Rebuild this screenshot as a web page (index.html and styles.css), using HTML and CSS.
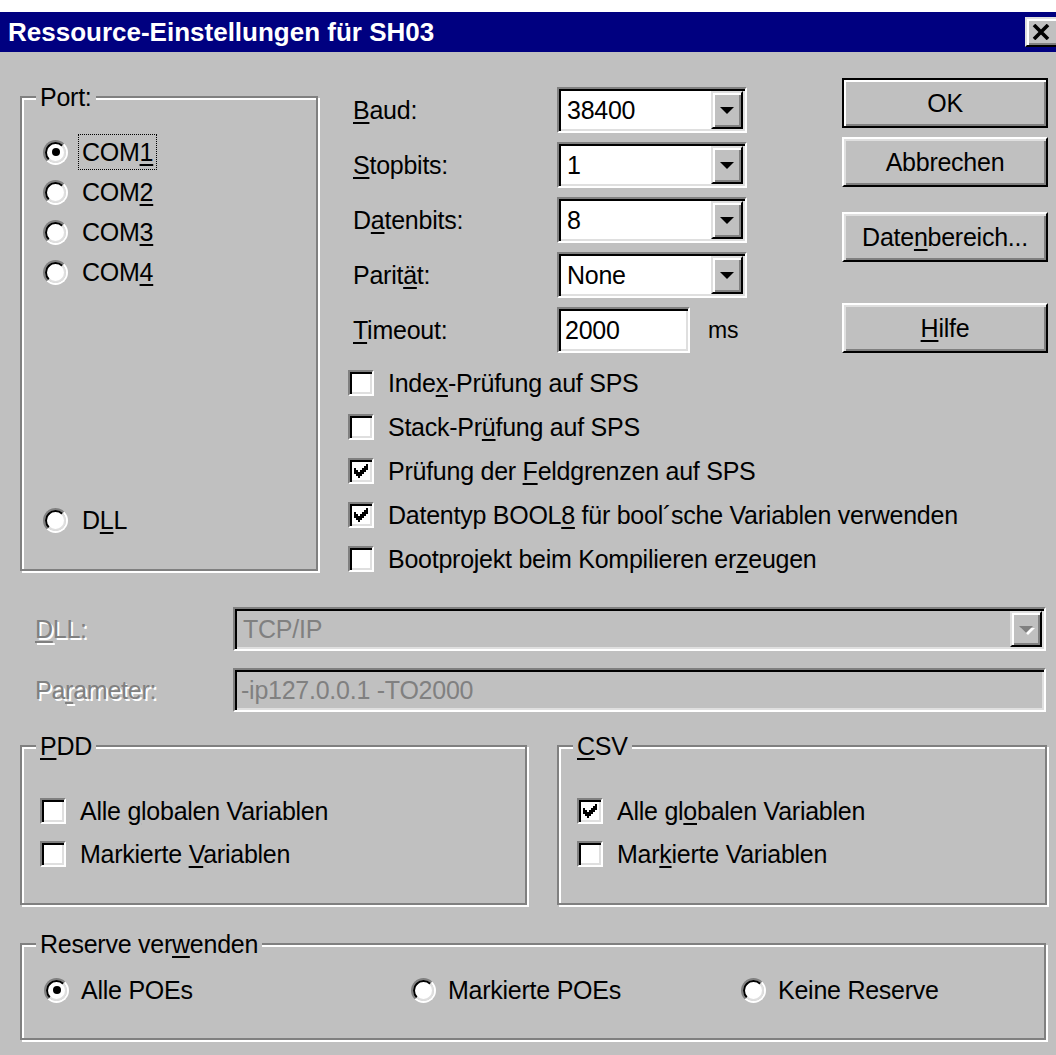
FILE: index.html
```html
<!DOCTYPE html>
<html lang="de">
<head>
<meta charset="utf-8">
<title>Ressource-Einstellungen für SH03</title>
<link rel="stylesheet" href="styles.css">
</head>
<body>
<svg class="defs" width="0" height="0" aria-hidden="true">
  <symbol id="tick" viewBox="0 0 7 7">
    <rect x="0" y="2" width="1" height="3"/>
    <rect x="1" y="3" width="1" height="3"/>
    <rect x="2" y="4" width="1" height="3"/>
    <rect x="3" y="3" width="1" height="3"/>
    <rect x="4" y="2" width="1" height="3"/>
    <rect x="5" y="1" width="1" height="3"/>
    <rect x="6" y="0" width="1" height="3"/>
  </symbol>
</svg>

<div class="window">
  <div class="titlebar">
    <span class="title">Ressource-Einstellungen für SH03</span>
    <span class="close">
      <svg width="18" height="16" viewBox="0 0 18 16"><path d="M2 1 L16 15 M16 1 L2 15" stroke="#000" stroke-width="3.6"/></svg>
    </span>
  </div>

  <div class="client">
    <div class="top">
      <div class="group port">
        <span class="legend">Port:</span>
        <label class="opt"><span class="radio on"></span><span class="cap focus">COM<u>1</u></span></label>
        <label class="opt"><span class="radio"></span><span class="cap">COM<u>2</u></span></label>
        <label class="opt"><span class="radio"></span><span class="cap">COM<u>3</u></span></label>
        <label class="opt"><span class="radio"></span><span class="cap">COM<u>4</u></span></label>
        <label class="opt last"><span class="radio"></span><span class="cap">D<u>L</u>L</span></label>
      </div>

      <div class="settings">
        <div class="field">
          <span class="lbl"><u>B</u>aud:</span>
          <span class="combo"><span class="val">38400</span><span class="drop"><i class="arrow"></i></span></span>
        </div>
        <div class="field">
          <span class="lbl"><u>S</u>topbits:</span>
          <span class="combo"><span class="val">1</span><span class="drop"><i class="arrow"></i></span></span>
        </div>
        <div class="field">
          <span class="lbl">D<u>a</u>tenbits:</span>
          <span class="combo"><span class="val">8</span><span class="drop"><i class="arrow"></i></span></span>
        </div>
        <div class="field">
          <span class="lbl">Parit<u>ä</u>t:</span>
          <span class="combo"><span class="val">None</span><span class="drop"><i class="arrow"></i></span></span>
        </div>
        <div class="field">
          <span class="lbl"><u>T</u>imeout:</span>
          <span class="edit short">2000</span>
          <span class="unit">ms</span>
        </div>

        <div class="checks">
          <label class="chk"><span class="box"></span><span>Inde<u>x</u>-Prüfung auf SPS</span></label>
          <label class="chk"><span class="box"></span><span>Stack-Pr<u>ü</u>fung auf SPS</span></label>
          <label class="chk"><span class="box"><svg class="tick"><use href="#tick"/></svg></span><span>Prüfung der <u>F</u>eldgrenzen auf SPS</span></label>
          <label class="chk"><span class="box"><svg class="tick"><use href="#tick"/></svg></span><span>Datentyp BOOL<u>8</u> für bool´sche Variablen verwenden</span></label>
          <label class="chk"><span class="box"></span><span>Bootprojekt beim Kompilieren er<u>z</u>eugen</span></label>
        </div>
      </div>

      <div class="buttons">
        <button class="btn default">OK</button>
        <button class="btn">Abbrechen</button>
        <button class="btn data">Date<u>n</u>bereich...</button>
        <button class="btn help"><u>H</u>ilfe</button>
      </div>
    </div>

    <div class="drow first">
      <span class="dlbl"><u>D</u>LL:</span>
      <span class="combo wide off"><span class="val">TCP/IP</span><span class="drop"><i class="arrow"></i></span></span>
    </div>
    <div class="drow">
      <span class="dlbl">Pa<u>r</u>ameter:</span>
      <span class="edit wide off">-ip127.0.0.1 -TO2000</span>
    </div>

    <div class="pair">
      <div class="group pdd">
        <span class="legend"><u>P</u>DD</span>
        <label class="chk"><span class="box"></span><span>Alle <u>g</u>lobalen Variablen</span></label>
        <label class="chk"><span class="box"></span><span>Markierte <u>V</u>ariablen</span></label>
      </div>
      <div class="group csv">
        <span class="legend"><u>C</u>SV</span>
        <label class="chk"><span class="box"><svg class="tick"><use href="#tick"/></svg></span><span>Alle gl<u>o</u>balen Variablen</span></label>
        <label class="chk"><span class="box"></span><span>Mar<u>k</u>ierte Variablen</span></label>
      </div>
    </div>

    <div class="group reserve">
      <span class="legend">Reserve ver<u>w</u>enden</span>
      <label class="opt r1"><span class="radio on"></span><span class="cap">Alle POEs</span></label>
      <label class="opt r2"><span class="radio"></span><span class="cap">Markierte POEs</span></label>
      <label class="opt"><span class="radio"></span><span class="cap">Keine Reserve</span></label>
    </div>
  </div>
</div>
</body>
</html>
```

FILE: styles.css
```css
* { box-sizing: border-box; }

html, body {
  margin: 0;
  height: 100%;
}

body {
  background: #c0c0c0;
  color: #000;
  font-family: "Liberation Sans", Arial, sans-serif;
  font-size: 25px;
  letter-spacing: -0.25px;
  line-height: 30px;
  overflow: hidden;
}

.defs { position: absolute; }

u {
  text-decoration-thickness: 2px;
  text-underline-offset: 3px;
}

/* window frame and caption */
.window {
  border-top: 12px solid #fff;
  min-height: 100%;
}

.titlebar {
  height: 40px;
  background: #000080;
  display: flex;
  align-items: center;
  padding-left: 8px;
}

.title {
  color: #fff;
  font-weight: bold;
  font-size: 26px;
  letter-spacing: 0;
  white-space: nowrap;
}

.close {
  margin-left: auto;
  margin-right: -4px;
  width: 35px;
  height: 30px;
  background: #c0c0c0;
  border: 2px solid;
  border-color: #dfdfdf #000 #000 #dfdfdf;
  box-shadow: inset 2px 2px 0 #fff, inset -2px -2px 0 #808080;
  display: flex;
  align-items: center;
  padding-left: 5px;
}

.client {
  padding: 0 8px 0 20px;
}

/* upper block: port group, serial settings, command buttons */
.top {
  display: flex;
  height: 528px;
}

/* etched group frame */
.group {
  position: relative;
  border: 2px solid #808080;
  box-shadow: inset 2px 2px 0 #fff, 2px 2px 0 #fff;
}

.legend {
  position: absolute;
  top: -16px;
  left: 14px;
  padding: 0 4px;
  background: #c0c0c0;
  white-space: nowrap;
}

.port {
  width: 298px;
  height: 475px;
  margin-top: 44px;
  padding: 34px 0 29px 21px;
  display: flex;
  flex-direction: column;
}

.opt {
  height: 40px;
  display: flex;
  align-items: center;
  gap: 10px;
  white-space: nowrap;
}

.port .last { margin-top: auto; }

.cap {
  border: 1px dotted transparent;
  padding: 2px 3px;
}

.cap.focus { border-color: #000; }

/* radio button */
.radio {
  position: relative;
  flex: none;
  width: 25px;
  height: 25px;
  border-radius: 50%;
  border: 2px solid;
  border-color: #808080 #fff #fff #808080;
}

.radio::before {
  content: "";
  position: absolute;
  inset: 0;
  border-radius: 50%;
  border: 2px solid;
  border-color: #000 #dfdfdf #dfdfdf #000;
  background: #fff;
}

.radio.on::after {
  content: "";
  position: absolute;
  left: 6.5px;
  top: 6.5px;
  width: 8px;
  height: 8px;
  border-radius: 50%;
  background: #000;
}

/* check box */
.chk {
  height: 44px;
  display: flex;
  align-items: center;
  gap: 14px;
  white-space: nowrap;
}

.box {
  flex: none;
  width: 26px;
  height: 26px;
  border: 2px solid;
  border-color: #808080 #fff #fff #808080;
  box-shadow: inset 2px 2px 0 #000, inset -2px -2px 0 #dfdfdf;
  background: #fff;
  display: flex;
  align-items: center;
  justify-content: center;
}

.tick {
  width: 14px;
  height: 14px;
  fill: #000;
  shape-rendering: crispEdges;
}

/* serial settings column */
.settings {
  margin-left: 32px;
  margin-top: 35px;
  width: 490px;
}

.field {
  height: 46px;
  margin-bottom: 9px;
  display: flex;
  align-items: center;
}

.lbl {
  width: 207px;
  padding-left: 3px;
  white-space: nowrap;
}

.combo,
.edit {
  height: 46px;
  border: 2px solid;
  border-color: #808080 #fff #fff #808080;
  box-shadow: inset 2px 2px 0 #000, inset -2px -2px 0 #dfdfdf;
  background: #fff;
  padding: 2px;
  display: flex;
  align-items: center;
  white-space: nowrap;
}

.combo { width: 190px; }

.edit { padding-left: 6px; }
.edit.short { width: 133px; }

.val {
  flex: 1;
  padding-left: 6px;
}

.drop {
  flex: none;
  width: 32px;
  align-self: stretch;
  background: #c0c0c0;
  border: 2px solid;
  border-color: #dfdfdf #000 #000 #dfdfdf;
  box-shadow: inset 2px 2px 0 #fff, inset -2px -2px 0 #808080;
  display: flex;
  align-items: center;
  justify-content: center;
}

.arrow {
  width: 0;
  height: 0;
  border-left: 7px solid transparent;
  border-right: 7px solid transparent;
  border-top: 7px solid #000;
}

.unit {
  margin-left: 18px;
  font-size: 23px;
}

.checks {
  margin-left: -2px;
  margin-top: -1px;
}

/* command buttons */
.buttons {
  margin-left: auto;
  width: 206px;
  display: flex;
  flex-direction: column;
}

.btn {
  font: inherit;
  letter-spacing: inherit;
  color: #000;
  height: 50px;
  background: #c0c0c0;
  border: 2px solid;
  border-color: #fff #000 #000 #fff;
  box-shadow: inset 2px 2px 0 #dfdfdf, inset -2px -2px 0 #808080;
  padding: 0;
  margin-top: 9px;
}

.btn.default {
  margin-top: 26px;
  border-color: #000;
  box-shadow: inset 2px 2px 0 #fff, inset -2px -2px 0 #808080;
}

.btn.data { margin-top: 25px; }
.btn.help { margin-top: 41px; }

/* DLL / parameter rows */
.drow {
  display: flex;
  align-items: center;
  height: 44px;
  margin-top: 17px;
}

.drow.first { margin-top: 27px; }

.dlbl {
  width: 213px;
  padding-left: 15px;
  color: #808080;
  text-shadow: 2px 2px 0 #fff;
}

.combo.wide,
.edit.wide {
  width: 813px;
  height: 44px;
}

.off {
  background: #c0c0c0;
  color: #808080;
}

.off .arrow {
  border-top-color: #808080;
  filter: drop-shadow(2px 2px 0 #fff);
}

/* PDD / CSV groups */
.pair {
  display: flex;
  gap: 30px;
  margin-top: 33px;
}

.pdd,
.csv {
  height: 160px;
  padding: 42px 0 0 18px;
}

.pdd { width: 507px; }
.csv { width: 490px; }

.pdd .chk,
.csv .chk { height: 43px; }

/* reserve group */
.reserve {
  width: 1026px;
  height: 97px;
  margin-top: 38px;
  padding: 25px 0 0 22px;
  display: flex;
  align-items: flex-start;
}

.reserve .cap {
  border: 0;
  padding: 0 0 0 2px;
}

.reserve .r1 { width: 367px; }
.reserve .r2 { width: 330px; }
```
